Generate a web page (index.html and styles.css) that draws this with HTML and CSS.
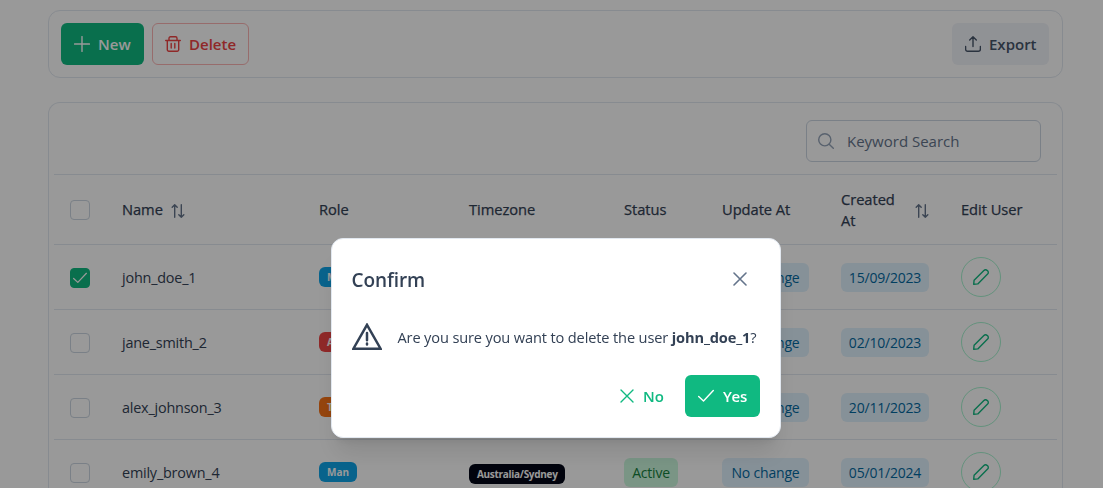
FILE: index.html
```html
<!DOCTYPE html>
<html lang="en">
<head>
<meta charset="utf-8">
<title>Users</title>
<link rel="stylesheet" href="styles.css">
</head>
<body>
<svg width="0" height="0" class="defs">
  <symbol id="plus" viewBox="0 0 16 16"><path d="M8 .6v14.8M.6 8h14.8"/></symbol>
  <symbol id="trash" viewBox="0 0 16 16"><path d="M.7 4.5h14.6M2.3 4.5v9.3a1.5 1.5 0 0 0 1.5 1.5h8.4a1.5 1.5 0 0 0 1.5-1.5V4.5M4 4.3V2.2A1.5 1.5 0 0 1 5.500.7h5A1.500 1.500 0 0 1 12 2.200v2.100M6.200 7.500v4.500M9.800 7.500v4.500"/></symbol>
  <symbol id="upload" viewBox="0 0 16 16"><path d="M8 10.500V1M4.700 4 8 .800 11.300 4M.600 10.500v2.800a2 2 0 0 0 2 2h10.800a2 2 0 0 0 2-2v-2.800"/></symbol>
  <symbol id="search" viewBox="0 0 16 16"><circle cx="6.800" cy="6.800" r="6.100"/><path d="m11.200 11.200 4.100 4.100"/></symbol>
  <symbol id="sort" viewBox="0 0 14 14"><path d="M3.700 13.300V.8M1.200 3.200 3.700.7l2.500 2.500M10.300.7v12.500M7.800 10.800l2.500 2.500 2.500-2.500"/></symbol>
  <symbol id="check" viewBox="0 0 16 16"><path d="M.700 8.500 5.500 13 15.300 2.600"/></symbol>
  <symbol id="times" viewBox="0 0 14 14"><path d="m1 1 12 12M13 1 1 13"/></symbol>
  <symbol id="pencil" viewBox="0 0 16 16"><path d="M.700 15.300 1.100 11.200 10.900 1.400a2.300 2.300 0 0 1 3.300 0l.400.400a2.300 2.300 0 0 1 0 3.300L4.800 14.900Z"/></symbol>
  <symbol id="warn" viewBox="0 0 30 28"><path d="M15 1.800 28.600 25.700H1.400ZM15 10v7.300M15 20.500v1"/></symbol>
</svg>

<main class="page">
  <section class="card toolbar">
    <button class="btn primary"><svg class="icon"><use href="#plus"/></svg><span>New</span></button>
    <button class="btn danger"><svg class="icon"><use href="#trash"/></svg><span>Delete</span></button>
    <button class="btn secondary"><svg class="icon"><use href="#upload"/></svg><span>Export</span></button>
  </section>

  <section class="card listing">
    <div class="filter">
      <label class="search"><svg class="icon"><use href="#search"/></svg><span>Keyword Search</span></label>
    </div>
    <div class="row head">
      <div><i class="box"></i></div>
      <div class="name">Name<svg class="sort"><use href="#sort"/></svg></div>
      <div>Role</div>
      <div>Timezone</div>
      <div>Status</div>
      <div>Update At</div>
      <div class="created"><span>Created At</span><svg class="sort"><use href="#sort"/></svg></div>
      <div>Edit User</div>
    </div>
    <div class="row">
      <div class="pick"><i class="box on"><svg><use href="#check"/></svg></i></div>
      <div class="user">john_doe_1</div>
      <div><b class="tag info">Man</b></div>
      <div></div>
      <div></div>
      <div><span class="chip wide">No change</span></div>
      <div><span class="chip">15/09/2023</span></div>
      <div><button class="edit"><svg class="icon"><use href="#pencil"/></svg></button></div>
    </div>
    <div class="row">
      <div class="pick"><i class="box"></i></div>
      <div class="user">jane_smith_2</div>
      <div><b class="tag red">Admin</b></div>
      <div></div>
      <div></div>
      <div><span class="chip wide">No change</span></div>
      <div><span class="chip">02/10/2023</span></div>
      <div><button class="edit"><svg class="icon"><use href="#pencil"/></svg></button></div>
    </div>
    <div class="row">
      <div class="pick"><i class="box"></i></div>
      <div class="user">alex_johnson_3</div>
      <div><b class="tag orange">Test</b></div>
      <div></div>
      <div></div>
      <div><span class="chip wide">No change</span></div>
      <div><span class="chip">20/11/2023</span></div>
      <div><button class="edit"><svg class="icon"><use href="#pencil"/></svg></button></div>
    </div>
    <div class="row">
      <div class="pick"><i class="box"></i></div>
      <div class="user">emily_brown_4</div>
      <div><b class="tag info">Man</b></div>
      <div class="zone"><b class="tag dark">Australia/Sydney</b></div>
      <div><span class="chip green">Active</span></div>
      <div><span class="chip wide">No change</span></div>
      <div><span class="chip">05/01/2024</span></div>
      <div><button class="edit"><svg class="icon"><use href="#pencil"/></svg></button></div>
    </div>
  </section>
</main>

<div class="mask">
  <div class="dialog" role="dialog">
    <header><h2>Confirm</h2><svg class="close"><use href="#times"/></svg></header>
    <div class="message"><svg class="warn"><use href="#warn"/></svg><p>Are you sure you want to delete the user <b>john_doe_1</b>?</p></div>
    <footer>
      <button class="btn text"><svg class="no-icon"><use href="#times"/></svg><span>No</span></button>
      <button class="btn primary yes"><svg class="icon"><use href="#check"/></svg><span>Yes</span></button>
    </footer>
  </div>
</div>
</body>
</html>
```
FILE: styles.css
```css
* { box-sizing: border-box; }
body {
  margin: 0;
  height: 488px;
  overflow: hidden;
  background: #fff;
  color: #334155;
  font: 15px/21px "Open Sans", "Noto Sans", sans-serif;
}
.defs { position: absolute; }
svg { fill: none; stroke: currentColor; stroke-width: 1.4; stroke-linecap: round; stroke-linejoin: round; flex: none; }
.icon { width: 16px; height: 16px; }
.page { width: 1015px; height: 488px; overflow: hidden; margin-left: 48px; padding-top: 10px; display: flex; flex-direction: column; gap: 24px; }
.card { border: 1px solid #e2e8f0; border-radius: 12px; background: #fff; flex: none; }
.toolbar { height: 68px; padding: 0 13px 0 12px; display: flex; align-items: center; gap: 8px; }
.btn {
  height: 42px; padding: 0 12px; display: flex; align-items: center; gap: 8px;
  border: 1px solid transparent; border-radius: 6px; background: none;
  font: 600 15px/21px "Open Sans", "Noto Sans", sans-serif; white-space: nowrap;
}
.primary { width: 83px; background: #10b981; color: #fff; }
.danger { width: 97px; border-color: #fcb5b5; color: #ef4444; }
.secondary { width: 97px; margin-left: auto; background: #f1f3f9; color: #475569; }
.listing { height: 386px; padding: 0 5px; border-bottom: 0; border-radius: 12px 12px 0 0; overflow: hidden; }
.filter { height: 72px; padding: 17px 16px 0 0; display: flex; justify-content: flex-end; align-items: flex-start; border-bottom: 1px solid #e2e8f0; }
.search { width: 235px; height: 42px; padding: 0 11px; display: flex; align-items: center; gap: 13px; border: 1px solid #cbd5e1; border-radius: 6px; color: #64748b; }
.search .icon { color: #94a3b8; }
.row { display: grid; grid-template-columns: 52px 197px 150px 155px 98px 119px 120px 112px; align-items: center; height: 65px; border-bottom: 1px solid #e2e8f0; }
.row > div { padding-left: 16px; white-space: nowrap; display: flex; align-items: center; }
.head { height: 70px; font-weight: 500; font-size: 14.7px; letter-spacing: -.05px; -webkit-text-stroke: .25px currentColor; }
.sort { width: 14px; height: 14px; color: #64748b; margin-top: 2px; }
.name { gap: 8px; }
.head .created { white-space: normal; justify-content: space-between; padding-right: 16px; }
.created span { width: 60px; }
.user { font-size: 14.4px; letter-spacing: -.2px; }
.pick { padding-top: 2px; }
.box { width: 20px; height: 20px; border: 1px solid #cbd5e1; border-radius: 4px; display: flex; align-items: center; justify-content: center; }
.box.on { background: #10b981; border-color: #10b981; color: #fff; }
.box svg { width: 14px; height: 14px; }
.tag { height: 20px; padding: 0 8px; border-radius: 6px; color: #fff; font-size: 10px; line-height: 20px; }
.info { background: #0ea5e9; }
.red { background: #ef4444; }
.orange { background: #f97316; }
.dark { background: #020617; width: 96px; letter-spacing: -.3px; }
.zone { padding-top: 4px; }
.chip { width: 88px; height: 29px; text-align: center; font-size: 14px; letter-spacing: -.2px; line-height: 29px; border-radius: 6px; background: #e0f2fe; color: #0369a1; }
.wide { width: 87px; }
.green { width: 54px; background: #cbf9de; color: #15803d; }
.edit { width: 40px; height: 40px; padding: 0; display: flex; align-items: center; justify-content: center; border: 1px solid #a7f3d0; border-radius: 50%; background: none; color: #10b981; }
.mask { position: fixed; inset: 0; background: rgba(0, 0, 0, .4); display: flex; align-items: flex-start; justify-content: center; padding: 238px 0 0 9px; }
.dialog { width: 450px; height: 200px; border: 1px solid #e2e8f0; border-radius: 12px; background: #fff; box-shadow: 0 20px 25px -5px rgba(0,0,0,.1), 0 8px 10px -6px rgba(0,0,0,.1); padding: 0 20px 20px 19.5px; }
header { height: 82px; display: flex; justify-content: space-between; align-items: center; padding-right: 13px; }
h2 { margin: 0; font-size: 19px; font-weight: 600; letter-spacing: -.1px; }
.close { width: 14px; height: 14px; margin-bottom: 2px; color: #64748b; stroke-width: 1.6; }
.message { height: 32px; display: flex; align-items: center; gap: 16px; }
.warn { width: 30px; height: 28px; stroke-width: 2.5; stroke-linejoin: miter; }
p { margin: 0; white-space: nowrap; font-size: 14.6px; letter-spacing: -.14px; }
footer { margin-top: 22px; display: flex; justify-content: flex-end; gap: 8px; }
.text { width: 70px; color: #10b981; }
.no-icon { width: 14px; height: 14px; }
.text span { margin-left: 1px; }
.yes { width: 75px; }
.yes span { letter-spacing: -.3px; margin-left: 1px; }
```
